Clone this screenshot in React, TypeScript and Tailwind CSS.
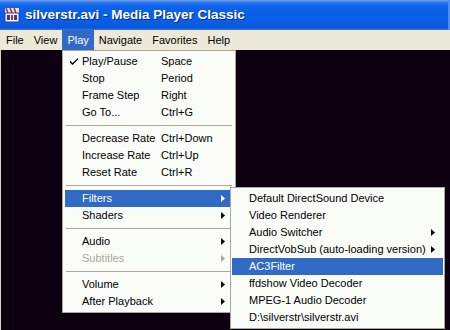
import { Fragment } from 'react'

type Item =
  | { sep: true }
  | { label: string; key?: string; checked?: boolean; sub?: boolean; disabled?: boolean; active?: boolean }

const playMenu: Item[] = [
  { label: 'Play/Pause', key: 'Space', checked: true },
  { label: 'Stop', key: 'Period' },
  { label: 'Frame Step', key: 'Right' },
  { label: 'Go To...', key: 'Ctrl+G' },
  { sep: true },
  { label: 'Decrease Rate', key: 'Ctrl+Down' },
  { label: 'Increase Rate', key: 'Ctrl+Up' },
  { label: 'Reset Rate', key: 'Ctrl+R' },
  { sep: true },
  { label: 'Filters', sub: true, active: true },
  { label: 'Shaders', sub: true },
  { sep: true },
  { label: 'Audio', sub: true },
  { label: 'Subtitles', sub: true, disabled: true },
  { sep: true },
  { label: 'Volume', sub: true },
  { label: 'After Playback', sub: true },
]

const filters: Item[] = [
  { label: 'Default DirectSound Device' },
  { label: 'Video Renderer' },
  { label: 'Audio Switcher', sub: true },
  { label: 'DirectVobSub (auto-loading version)', sub: true },
  { label: 'AC3Filter', active: true },
  { label: 'ffdshow Video Decoder' },
  { label: 'MPEG-1 Audio Decoder' },
  { label: 'D:\\silverstr\\silverstr.avi' },
]

const menuBar = ['File', 'View', 'Play', 'Navigate', 'Favorites', 'Help']

function Arrow({ color }: { color: string }) {
  return (
    <svg width="4" height="7" viewBox="0 0 4 7" className="shrink-0">
      <path d="M0 0 L4 3.5 L0 7 Z" fill={color} />
    </svg>
  )
}

function Check({ color }: { color: string }) {
  return (
    <svg width="8" height="7" viewBox="0 0 8 7">
      <path d="M0 2.5 L0 4.5 L2.5 7 L8 1.5 L8 0 L2.5 5 Z" fill={color} />
    </svg>
  )
}

function MenuRows({ items, keyCol, arrowRight }: { items: Item[]; keyCol?: number; arrowRight: string }) {
  return (
    <>
      {items.map((it, i) => {
        if ('sep' in it) {
          return (
            <div key={i} className="h-[9px] flex items-center px-[1px]">
              <div className="w-full h-0 border-t border-[#aca899]" />
            </div>
          )
        }
        const fg = it.active ? '#ffffff' : it.disabled ? '#aca899' : '#000000'
        return (
          <div
            key={i}
            className={`h-[17px] flex items-center relative ${it.active ? 'bg-[#316ac5]' : ''}`}
            style={{ color: fg }}
          >
            <div className="w-[17px] flex justify-center pl-[1px]">
              {it.checked && <Check color={fg} />}
            </div>
            <span className="whitespace-nowrap">{it.label}</span>
            {it.key && (
              <span className="absolute whitespace-nowrap" style={{ left: keyCol }}>{it.key}</span>
            )}
            {it.sub && (
              <span className={`absolute top-[5px] ${arrowRight}`}>
                <Arrow color={it.disabled ? '#aca899' : fg} />
              </span>
            )}
          </div>
        )
      })}
    </>
  )
}

function AppIcon() {
  return (
    <svg width="16" height="16" viewBox="0 0 16 16">
      <rect x="1" y="1" width="14" height="5" fill="#e8e8e8" />
      <path d="M2 1 L4 6 M6 1 L8 6 M10 1 L12 6" stroke="#c02020" strokeWidth="1.5" />
      <rect x="1" y="6" width="14" height="9" fill="#f4f4f4" stroke="#3a3a9a" strokeWidth="1" />
      <rect x="3" y="8" width="3" height="5" fill="#2040c0" />
      <rect x="7" y="8" width="2" height="5" fill="#d02020" />
      <rect x="10" y="8" width="3" height="5" fill="#2040c0" />
    </svg>
  )
}

export default function App() {
  return (
    <div className="w-[450px] h-[330px] relative overflow-hidden bg-[#0d0010] flex flex-col" style={{ fontFamily: '"Liberation Sans", Arial, sans-serif' }}>
      {/* title bar */}
      <div className="h-[30px] shrink-0 flex items-center gap-[5px] pl-[4px] bg-[linear-gradient(180deg,#7f9ed6_0%,#2f7df4_7%,#0c62ea_20%,#0a5ce4_80%,#0a52d4_93%,#3a7ae0_100%)] border-r-2 border-[#4d8cf0]">
        <AppIcon />
        <span className="text-white font-bold text-[13.5px] [text-shadow:1px_1px_0_#0a2a80]">
          silverstr.avi - Media Player Classic
        </span>
      </div>

      {/* menu bar */}
      <div className="h-[20px] shrink-0 flex bg-[#ece9d8] text-[11px] text-black border-l border-[#ece9d8]">
        {menuBar.map(m => (
          <div
            key={m}
            className={`px-[5px] flex items-center ${m === 'Play' ? 'bg-[#316ac5] text-white' : ''}`}
          >
            {m}
          </div>
        ))}
      </div>

      {/* video area */}
      <div className="flex-1 border-l border-[#d6d3c4] flex">
        <div className="w-[12px] border-r border-[#150018]" />
      </div>

      {/* Play menu */}
      <div className="absolute left-[62px] top-[50px] w-[174px] bg-[#fafcf8] border border-[#aca899] py-[2px] px-[2px] text-[11px]">
        <MenuRows items={playMenu} keyCol={96} arrowRight="right-[8px]" />
      </div>

      {/* Filters submenu */}
      <div className="absolute left-[230px] top-[187px] w-[215px] bg-[#fafcf8] border border-[#aca899] py-[2px] px-[1px] text-[11px]">
        {filters.map((it, i) => (
          <Fragment key={i}>
            <MenuRows items={[it]} arrowRight="right-[8px]" />
          </Fragment>
        ))}
      </div>
    </div>
  )
}
